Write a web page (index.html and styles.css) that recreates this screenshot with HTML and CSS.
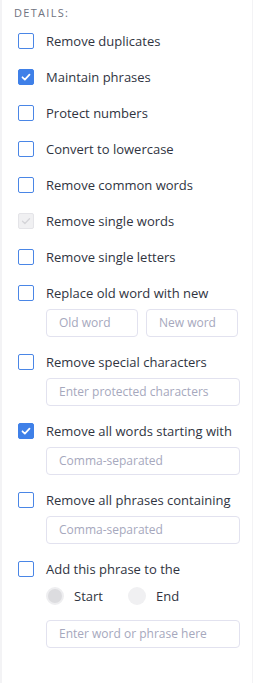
FILE: index.html
```html
<!DOCTYPE html>
<html lang="en">
<head>
<meta charset="utf-8">
<title>Details</title>
<link rel="stylesheet" href="styles.css">
</head>
<body>
<div class="panel">
  <div class="heading">DETAILS:</div>
  <div class="options">
    <div class="option"><div class="row"><span class="cb"></span><span class="label">Remove duplicates</span></div></div>
    <div class="option"><div class="row"><span class="cb checked"><svg viewBox="0 0 16 16"><path d="M4 8.3l2.7 2.6L12 5.4"/></svg></span><span class="label">Maintain phrases</span></div></div>
    <div class="option"><div class="row"><span class="cb"></span><span class="label">Protect numbers</span></div></div>
    <div class="option"><div class="row"><span class="cb"></span><span class="label">Convert to lowercase</span></div></div>
    <div class="option"><div class="row"><span class="cb"></span><span class="label">Remove common words</span></div></div>
    <div class="option"><div class="row"><span class="cb disabled"><svg viewBox="0 0 16 16"><path d="M4 8.3l2.7 2.6L12 5.4"/></svg></span><span class="label">Remove single words</span></div></div>
    <div class="option"><div class="row"><span class="cb"></span><span class="label">Remove single letters</span></div></div>
    <div class="option">
      <div class="row"><span class="cb"></span><span class="label">Replace old word with new</span></div>
      <div class="sub pair">
        <div class="input">Old word</div>
        <div class="input">New word</div>
      </div>
    </div>
    <div class="option">
      <div class="row"><span class="cb"></span><span class="label">Remove special characters</span></div>
      <div class="sub"><div class="input">Enter protected characters</div></div>
    </div>
    <div class="option">
      <div class="row"><span class="cb checked"><svg viewBox="0 0 16 16"><path d="M4 8.3l2.7 2.6L12 5.4"/></svg></span><span class="label">Remove all words starting with</span></div>
      <div class="sub"><div class="input">Comma-separated</div></div>
    </div>
    <div class="option">
      <div class="row"><span class="cb"></span><span class="label">Remove all phrases containing</span></div>
      <div class="sub"><div class="input">Comma-separated</div></div>
    </div>
    <div class="option">
      <div class="row"><span class="cb"></span><span class="label">Add this phrase to the</span></div>
      <div class="sub radios">
        <div class="radio-item"><span class="radio selected"></span><span class="label">Start</span></div>
        <div class="radio-item"><span class="radio"></span><span class="label">End</span></div>
      </div>
      <div class="sub wide"><div class="input">Enter word or phrase here</div></div>
    </div>
  </div>
</div>
</body>
</html>
```
FILE: styles.css
```css
html, body {
  margin: 0;
  padding: 0;
}
body {
  background: #f3f3f5;
  font-family: "Open Sans", "Noto Sans", sans-serif;
  color: #30343f;
  padding: 0 1px 0 2px;
}
.panel {
  background: #ffffff;
  height: 683px;
  padding: 6px 12px 0 12px;
  box-sizing: border-box;
}
.heading {
  font-size: 11px;
  line-height: 14px;
  letter-spacing: 1.3px;
  color: #6f7380;
  margin-bottom: 10px;
}
.options {
  display: flex;
  flex-direction: column;
  gap: 14px;
  padding-left: 4px;
}
.row {
  display: flex;
  align-items: center;
  gap: 12px;
  min-height: 22px;
}
.label {
  font-size: 13px;
  line-height: 18px;
  font-weight: 500;
  white-space: nowrap;
}
.cb {
  width: 16px;
  height: 16px;
  box-sizing: border-box;
  border: 1.5px solid #4a86e6;
  border-radius: 2px;
  flex: none;
  display: flex;
}
.cb svg {
  width: 100%;
  height: 100%;
  fill: none;
  stroke: #ffffff;
  stroke-width: 2;
  stroke-linecap: round;
  stroke-linejoin: round;
}
.cb.checked {
  background: #3f80e8;
  border-color: #3f80e8;
}
.cb.disabled {
  background: #f0f0f2;
  border: 1px solid #e4e4e8;
}
.cb.disabled svg {
  stroke: #d4d4d8;
  stroke-width: 1.5;
}
.sub {
  margin-left: 28px;
  margin-top: 5px;
}
.pair {
  display: grid;
  grid-template-columns: 92px 92px;
  gap: 8px;
}
.input {
  height: 28px;
  box-sizing: border-box;
  border: 1px solid #e2e2ef;
  border-radius: 4px;
  padding: 0 12px;
  font-size: 12px;
  line-height: 26px;
  color: #a6a8bd;
  white-space: nowrap;
  width: 194px;
}
.pair .input {
  width: auto;
}
.radios {
  display: flex;
  gap: 10px;
  margin-top: 6px;
}
.radio-item {
  display: flex;
  align-items: center;
  gap: 10px;
  width: 72px;
  height: 20px;
}
.radio-item .label {
  line-height: 20px;
}
.radio {
  width: 18px;
  height: 18px;
  box-sizing: border-box;
  border-radius: 50%;
  background: #f0f0f2;
  flex: none;
}
.radio.selected {
  background: #dcdcdf;
  border: 2px solid #eeeef0;
}
.sub.wide {
  margin-top: 14px;
}
```
